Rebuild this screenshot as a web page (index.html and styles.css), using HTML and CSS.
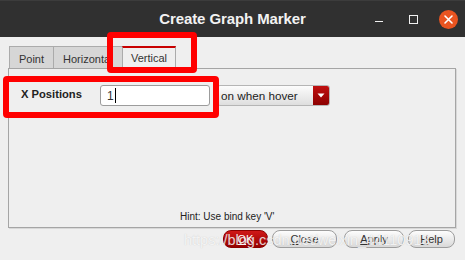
FILE: index.html
```html
<!DOCTYPE html>
<html>
<head>
<meta charset="utf-8">
<link rel="stylesheet" href="styles.css">
</head>
<body>
<div class="window">
  <header class="titlebar">
    <span></span>
    <span class="title">Create Graph Marker</span>
    <div class="controls">
      <span class="ctl-min"></span>
      <span class="ctl-max"></span>
      <span class="ctl-close"><svg width="19" height="19" viewBox="0 0 19 19"><path d="M6 6 L13 13 M13 6 L6 13" stroke="#fff" stroke-width="1.6" stroke-linecap="round"/></svg></span>
    </div>
  </header>
  <main class="content">
    <div class="tabs">
      <div class="tab tab-point">Point</div>
      <div class="tab tab-horizontal">Horizontal</div>
      <div class="tab tab-active">Vertical</div>
    </div>
    <section class="panel">
      <div class="row">
        <span class="label">X Positions</span>
        <div class="input">1<span class="caret"></span></div>
        <div class="combo">
          <span class="combo-text">on when hover</span>
          <span class="combo-btn"><svg width="8" height="5" viewBox="0 0 8 5"><path d="M0.5 0.5 H7.5 L4 4.5 Z" fill="#fff"/></svg></span>
        </div>
      </div>
      <div class="hint">Hint: Use bind key 'V'</div>
    </section>
    <div class="buttons">
      <button class="btn btn-ok"><u>O</u>K</button>
      <button class="btn btn-close"><u>C</u>lose</button>
      <button class="btn btn-apply"><u>A</u>pply</button>
      <button class="btn btn-help"><u>H</u>elp</button>
    </div>
  </main>
  <div class="mark mark-tab"></div>
  <div class="mark mark-row"></div>
  <div class="watermark">https://blog.csdn.net/weixin_44110913</div>
</div>
</body>
</html>
```

FILE: styles.css
```css
* { box-sizing: border-box; }
html, body { margin: 0; padding: 0; }
body {
  width: 465px;
  height: 260px;
  overflow: hidden;
  background: #efefef;
  font-family: "Liberation Sans", Arial, sans-serif;
}
.window {
  position: relative;
  width: 465px;
  height: 260px;
  background: #efefef;
}
.titlebar {
  height: 37px;
  background: #303030;
  border-top: 1px solid #3c3c3c;
  display: grid;
  grid-template-columns: 1fr auto 1fr;
  align-items: center;
}
.title {
  color: #f2f2f2;
  font-weight: bold;
  font-size: 15px;
  letter-spacing: -0.1px;
  padding-bottom: 1px;
}
.controls {
  display: flex;
  align-items: center;
  justify-content: flex-end;
  padding-right: 7px;
}
.ctl-min {
  width: 8px;
  height: 1.5px;
  background: #f0f0f0;
  margin-top: 5px;
}
.ctl-max {
  width: 9px;
  height: 9px;
  border: 1px solid #f0f0f0;
  margin-left: 26px;
}
.ctl-close {
  width: 19px;
  height: 19px;
  border-radius: 50%;
  background: #e95420;
  margin-left: 21px;
  display: flex;
}
.content {
  padding: 9px 9px 0 8px;
}
.tabs {
  display: flex;
  height: 22px;
  padding-left: 1px;
  align-items: flex-start;
}
.tab {
  height: 22px;
  font-size: 11px;
  color: #333;
  background: #d6d6d6;
  border: 1px solid #ababab;
  border-bottom: none;
  border-right: none;
  display: flex;
  justify-content: center;
  padding-top: 6px;
  white-space: nowrap;
  overflow: hidden;
}
.tab-point { width: 44px; }
.tab-horizontal { width: 69px; justify-content: flex-start; padding-left: 9px; }
.tab-active {
  width: 54px;
  height: 23px;
  background: #efefef;
  border-top: 2px solid #c80000;
  border-right: 1px solid #ababab;
  padding-top: 4px;
  position: relative;
  z-index: 1;
}
.panel {
  height: 160px;
  border: 1px solid #a5a5a5;
  box-shadow: 1px 1px 0 #d8d8d8;
  display: flex;
  flex-direction: column;
  padding: 16px 0 0 12px;
}
.row {
  display: flex;
  align-items: center;
  height: 21px;
}
.label {
  width: 79px;
  font-size: 11.2px;
  font-weight: bold;
  color: #222;
  margin-top: -4px;
}
.input {
  width: 110px;
  height: 21px;
  background: #fff;
  border: 1px solid #9c9c9c;
  border-radius: 3px;
  font-size: 12px;
  color: #333;
  display: flex;
  align-items: center;
  padding-left: 6px;
}
.caret {
  display: inline-block;
  width: 1px;
  height: 15px;
  background: #000;
  margin-left: 1px;
}
.combo {
  margin-left: 7px;
  width: 113px;
  height: 21px;
  border: 1px solid #b5b5b5;
  border-radius: 3px;
  background: linear-gradient(#fcfcfc, #dedede);
  display: flex;
  overflow: hidden;
}
.combo-text {
  flex: 1;
  font-size: 11.7px;
  color: #222;
  padding-left: 3px;
  line-height: 19px;
}
.combo-btn {
  width: 16px;
  background: linear-gradient(#c01010, #8c0000);
  display: flex;
  align-items: center;
  justify-content: center;
}
.hint {
  margin-top: auto;
  margin-left: 159px;
  margin-bottom: 5px;
  font-size: 10px;
  color: #222;
}
.buttons {
  display: flex;
  justify-content: flex-end;
  margin-top: 2px;
  padding-right: 1px;
  gap: 4px;
}
.btn {
  height: 18px;
  border-radius: 8px;
  border: 1px solid #9d9d9d;
  background: linear-gradient(#fdfdfd, #d9d9d9);
  font-family: "Liberation Sans", Arial, sans-serif;
  font-size: 11px;
  color: #333;
  padding: 0;
}
.btn u { text-decoration: underline; }
.btn-ok {
  width: 45px;
  background: linear-gradient(#d01818, #960000);
  border-color: #8a0000;
  color: #fff;
}
.btn-close { width: 65px; }
.btn-apply { width: 60px; margin-left: 3px; }
.btn-help { width: 47px; }
.mark {
  position: absolute;
  border: 6px solid #ff0000;
  border-radius: 4px;
  z-index: 5;
}
.mark-tab {
  left: 107px;
  top: 32px;
  width: 90px;
  height: 41px;
}
.mark-row {
  left: 3px;
  top: 76px;
  width: 216px;
  height: 42px;
}
.watermark {
  position: absolute;
  left: 184px;
  top: 232px;
  font-size: 14.5px;
  color: rgba(255, 255, 255, 0.78);
  text-shadow: 0 0 1px rgba(120, 120, 120, 0.35);
  z-index: 6;
  white-space: nowrap;
}
```
